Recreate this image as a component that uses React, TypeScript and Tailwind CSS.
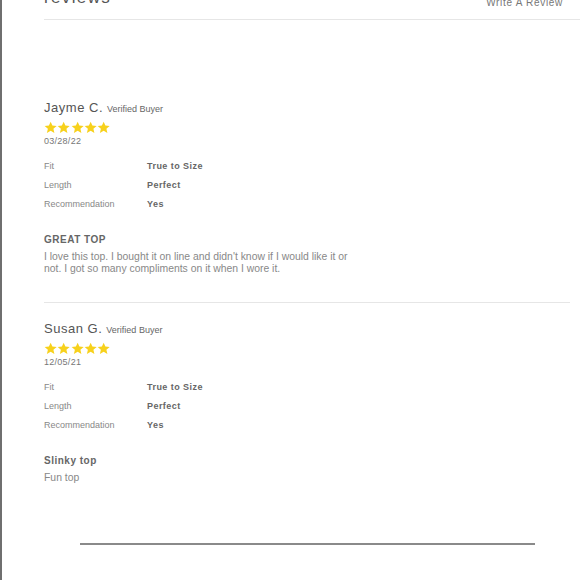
import React from 'react';

interface Review {
  name: string;
  date: string;
  fit: string;
  length: string;
  recommendation: string;
  title: string;
  body: string;
}

const reviews: Review[] = [
  {
    name: 'Jayme C.',
    date: '03/28/22',
    fit: 'True to Size',
    length: 'Perfect',
    recommendation: 'Yes',
    title: 'GREAT TOP',
    body: "I love this top. I bought it on line and didn't know if I would like it or not. I got so many compliments on it when I wore it.",
  },
  {
    name: 'Susan G.',
    date: '12/05/21',
    fit: 'True to Size',
    length: 'Perfect',
    recommendation: 'Yes',
    title: 'Slinky top',
    body: 'Fun top',
  },
];

function Star() {
  return (
    <svg width="13.3" height="13" viewBox="0 0 24 24" className="shrink-0">
      <path
        d="M12 1.2l3.2 7.3 7.9.7-6 5.3 1.8 7.8L12 18.2l-6.9 4.1 1.8-7.8-6-5.3 7.9-.7z"
        fill="#f7d11c"
      />
    </svg>
  );
}

function ReviewItem({ review, first }: { review: Review; first: boolean }) {
  const rows = [
    ['Fit', review.fit],
    ['Length', review.length],
    ['Recommendation', review.recommendation],
  ];

  return (
    <div className={first ? 'pt-[80px]' : 'pt-[18px]'}>
      {/* name + badge */}
      <div className="flex items-baseline h-[16px] leading-[16px]">
        <span className="text-[13px] tracking-[0.04em] text-[#555]">{review.name}</span>
        <span className="ml-[4px] text-[9px] text-[#666]">Verified Buyer</span>
      </div>

      <div className="flex mt-[5px] h-[13px]">
        {[0, 1, 2, 3, 4].map((i) => (
          <Star key={i} />
        ))}
      </div>

      <div className="mt-[1px] text-[9px] leading-[12px] text-[#777] tracking-[0.03em]">{review.date}</div>

      <div className="mt-[10px]">
        {rows.map(([label, value]) => (
          <div key={label} className="flex items-center h-[19px] text-[9px]">
            <span className="w-[103px] text-[#888]">{label}</span>
            <span className="font-bold text-[#666] tracking-[0.05em]">{value}</span>
          </div>
        ))}
      </div>

      <div className="mt-[19px] text-[10px] leading-[14px] font-bold text-[#666] tracking-[0.05em]">
        {review.title}
      </div>
      <p className="mt-[4px] w-[314px] text-[10.4px] leading-[12px] text-[#888]">{review.body}</p>
    </div>
  );
}

export default function App() {
  return (
    <div
      className="w-[580px] h-[580px] overflow-hidden bg-white border-l-2 border-[#6f6f6f]"
      style={{ fontFamily: '"Liberation Sans", Arial, sans-serif' }}
    >
      <div className="-mt-[12px] pl-[42px]">
        {/* header */}
        <div className="flex justify-between items-start h-[31px] pr-[17px]">
          <span className="text-[17px] leading-[20px] tracking-[0.08em] text-[#555]">reviews</span>
          <span className="mt-[5px] text-[10px] leading-[20px] tracking-[0.07em] text-[#777]">Write A Review</span>
        </div>
        <div className="h-px bg-[#e6e6e6]" />

        <ReviewItem review={reviews[0]} first />
        <div className="mt-[27px] mr-[10px] h-px bg-[#e6e6e6]" />
        <ReviewItem review={reviews[1]} first={false} />
      </div>

      <div className="mt-[59px] ml-[78px] w-[455px] h-[2px] bg-[#8a8a8a]" />
    </div>
  );
}
